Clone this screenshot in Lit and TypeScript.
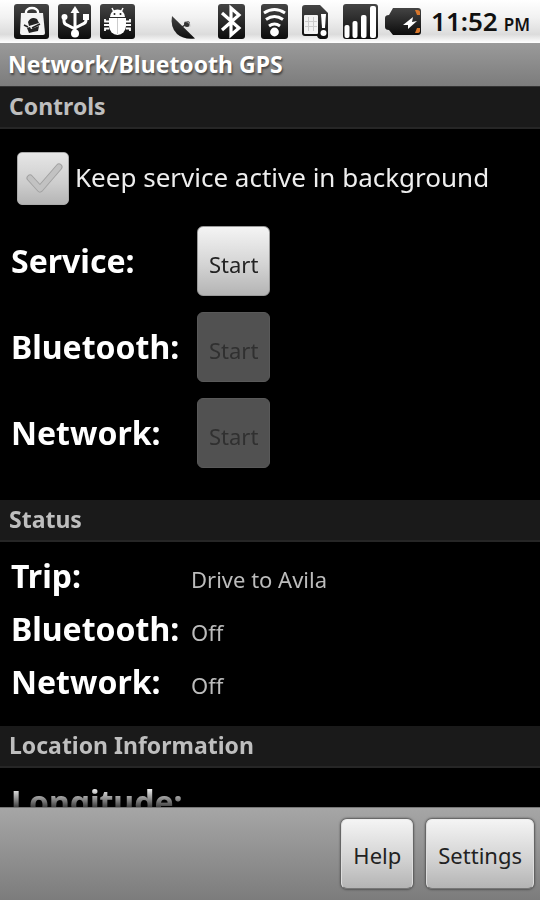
import { LitElement, html, css, svg, nothing } from "lit";
import { customElement, property } from "lit/decorators.js";

const glyphs = {
  bag: svg`
    <rect x="4" y="4" width="35" height="35" rx="3" fill="url(#tile)"/>
    <path d="M16 14v-2a6 4 0 0 1 12 0v2" fill="none" stroke="#fff" stroke-width="2.4"/>
    <path d="M11 13h22l2 20q0 2-2 2H12q-2 0-2-2z" fill="#f4f4f4"/>
    <path d="M18 22q3-6 9-3l2 4-10 3zM17 28l3-1 1 2 8-3-1 5-5 1-4 1z" fill="#222"/>
    <path d="M14 25l4 2M22 28l8-4" stroke="#222" stroke-width="1.600"/>`,
  usb: svg`
    <rect x="5" y="4" width="33" height="35" rx="3" fill="url(#tile)"/>
    <path d="M22 34V11M22 29l-8-4q-3-1-3-4v-4M22 28l8-4q3-1 3-4v-3" fill="none" stroke="#fff" stroke-width="3"/>
    <path d="M22 6l4.500 7h-9z" fill="#fff"/>
    <circle cx="22" cy="33.500" r="4" fill="#fff"/>
    <circle cx="11.500" cy="17" r="3" fill="#fff"/>
    <rect x="30" y="14" width="6" height="6" fill="#fff"/>`,
  bug: svg`
    <rect x="4" y="4" width="35" height="35" rx="3" fill="url(#tile)"/>
    <path d="M14 17a7.500 7.500 0 0 1 15 0z" fill="#fff"/>
    <path d="M16 8l2 4M27 8l-2 4" stroke="#fff" stroke-width="1.500"/>
    <circle cx="18.500" cy="14" r="1" fill="#222"/><circle cx="24.500" cy="14" r="1" fill="#222"/>
    <path d="M13 18h17v8a8.500 9 0 0 1-17 0z" fill="#fff"/>
    <path d="M21.500 18v16" stroke="#ccc" stroke-width="1"/>
    <path d="M13 21.500H9V19M13 25H8M13 28.500H9V31M30 21.500h4V19M30 25h5M30 28.500h4V31" fill="none" stroke="#fff" stroke-width="1.800"/>`,
  dish: svg`
    <path d="M5 16Q3 27 10 34Q17 40 28 38.500Z" fill="url(#tile)"/>
    <path d="M15 27l6-4" stroke="#333" stroke-width="1.500"/>
    <circle cx="20" cy="24" r="3" fill="#333"/>
    <path d="M18 21.500q5 0 5 5" stroke="#bbb" fill="none"/>`,
  bluetooth: svg`
    <rect x="8" y="4" width="27" height="35" rx="3" fill="url(#tile)"/>
    <path d="M12 13l17 15-8 7V8l8 7-17 15" fill="none" stroke="#fff" stroke-width="3.200"/>`,
  wifi: svg`
    <rect x="8" y="4" width="27" height="35" rx="3" fill="url(#tile)"/>
    <path d="M11 13q10.500-7 21 0M13 19.500q8.500-6 17 0M16 26q5.500-4 11 0" fill="none" stroke="#fff" stroke-width="3"/>
    <circle cx="21.500" cy="32" r="4.400" fill="#fff"/>`,
  sim: svg`
    <path d="M9 5h15l8 8v23q0 3-3 3h-5q-2 0-3-3H9q-3 0-3-3V8q0-3 3-3z" fill="url(#tile)"/>
    <rect x="8" y="15" width="14" height="19" rx="1" fill="#f2f2f2"/>
    <path d="M12.500 17v14M17.500 17v14M9 21.500h12M9 26.500h12" stroke="#ccc"/>
    <path d="M25 14h5l-1 14h-3z" fill="#fff"/><circle cx="27.500" cy="33" r="3" fill="#fff"/>`,
  signal: svg`
    <rect x="4" y="4" width="35" height="35" rx="3" fill="url(#tile)"/>
    <rect x="5.500" y="25" width="5" height="13" rx="2" fill="#fff"/>
    <rect x="13.500" y="21" width="5" height="17" rx="2" fill="#fff"/>
    <rect x="22" y="15" width="5.500" height="23" rx="2" fill="#fff"/>
    <rect x="31" y="6" width="6" height="32" rx="2" fill="#fff"/>`,
  battery: svg`
    <path d="M11 8h25q3 0 3 3v21q0 3-3 3H11l-4-5q-4 0-4-3v-9q0-3 4-3z" fill="url(#tile)"/>
    <path d="M33 10h2q3 0 3 2v3h-3zM33 33h2q3 0 3-2v-3h-3z" fill="#d9772b"/>
    <path d="M21 25l10-8-1 5 5-1-9 8 0-4z" fill="#fff"/>`,
};

type GlyphName = keyof typeof glyphs;

@customElement("status-icon")
class StatusIcon extends LitElement {
  @property() name: GlyphName = "bag";

  static styles = css`
    :host { display: block; flex: none; width: 43px; height: 43px; }
    .glyph { display: block; width: 100%; height: 100%; }
  `;

  render() {
    return html`<svg class="glyph" viewBox="0 0 43 43" aria-hidden="true">
      <defs>
        <linearGradient id="tile" x1="0" y1="0" x2="0" y2="1">
          <stop offset="0" stop-color="#444"/><stop offset="1" stop-color="#0c0c0c"/>
        </linearGradient>
      </defs>
      ${glyphs[this.name]}
    </svg>`;
  }
}

@customElement("app-root")
class AppRoot extends LitElement {
  static styles = css`
    :host {
      display: flex;
      flex-direction: column;
      height: 100vh;
      background: #000;
      color: #fff;
      font-family: "Noto Sans", "Open Sans", sans-serif;
      font-size: 22px;
      line-height: 32px;
    }
    * { box-sizing: border-box; }
    .statusbar {
      flex: none;
      display: flex;
      align-items: center;
      justify-content: space-between;
      height: 43px;
      padding: 0 10px;
      background: linear-gradient(#fff, #f2f2f2 40%, #dcdcdc 80%, #fff);
      color: #111;
    }
    .group { display: flex; align-items: center; }
    .clock {
      display: flex;
      align-items: baseline;
      gap: 6px;
      padding-left: 6px;
      padding-top: 2px;
      font-size: 26px;
      font-weight: 600;
    }
    .meridiem { font-size: 17px; }
    .titlebar {
      flex: none;
      height: 44px;
      padding: 5px 8px;
      border-bottom: 1px solid #333;
      background: linear-gradient(#9a9a9a, #7c7c7c);
      font-size: 23px;
      font-weight: 700;
      text-shadow: 1px 2px 2px #444;
    }
    .title { margin: 0; font: inherit; }
    .content {
      flex: 1;
      min-height: 0;
      overflow-y: auto;
      scrollbar-width: none;
      mask-image: linear-gradient(#000 calc(100% - 20px), rgb(0 0 0 / 25%));
    }
    .heading {
      height: 42px;
      margin: 0;
      padding: 3px 9px;
      background: #1a1a1a;
      border-bottom: 2px solid #262626;
      color: #bebebe;
      font-size: 23px;
      font-weight: 700;
    }
    .keep {
      display: flex;
      align-items: center;
      gap: 6px;
      padding: 23px 17px 21px;
      font-size: 26px;
      color: #eee;
    }
    .caption { padding-bottom: 3px; }
    .tick { display: grid; flex: none; width: 52px; height: 53px; }
    .box, .mark { grid-area: 1 / 1; width: 100%; height: 100%; }
    .box {
      appearance: none;
      margin: 0;
      border: 1px solid #aaa;
      border-radius: 5px;
      background: linear-gradient(#e6e6e6, #cdcdcd 60%, #b5b5b5);
    }
    .mark { pointer-events: none; fill: none; stroke-linejoin: round; stroke-linecap: round; }
    .edge { stroke: #a2a2a2; stroke-width: 7; }
    .fill { stroke: #c2c2c2; stroke-width: 5; }
    .box:checked + .mark .fill { stroke: #6fc02c; }
    .rows { display: grid; grid-template-columns: 180px 1fr; margin: 0; padding: 0 11px; }
    .controls { grid-auto-rows: 86px; padding-bottom: 16px; }
    .status { grid-auto-rows: 53px; padding-top: 8px; padding-bottom: 17px; }
    .row { display: contents; }
    .name { margin: 0; font-size: 32px; line-height: 52px; font-weight: 700; white-space: nowrap; }
    .controls .name { line-height: 70px; }
    .value { margin: 0; line-height: 58px; color: #bcbcbc; }
    .controls .cell { padding-left: 6px; }
    .btn {
      height: 70px;
      padding: 6px 11px 0;
      border: 1px solid #999;
      border-radius: 6px;
      background: linear-gradient(#f4f4f4, #d4d4d4 55%, #b4b4b4);
      color: #222;
      font-family: inherit;
      font-size: 22px;
      line-height: 32px;
    }
    .btn:disabled { background: #515151; border-color: #595959; color: #303030; }
    .footer {
      flex: none;
      display: flex;
      justify-content: flex-end;
      gap: 13px;
      padding: 11px 6px;
      border-top: 1px solid #777;
      background: linear-gradient(#a6a6a6, #7c7c7c);
    }
    .footer .btn { padding-top: 2px; border-color: #eee #ddd #777; box-shadow: 0 0 2px 1px #555; }
  `;

  private control(name: string, disabled: boolean) {
    return html`<div class="row">
      <p class="name">${name}:</p>
      <div class="cell">
        <button class="btn" ?disabled=${disabled} aria-label="Start ${name}">Start</button>
      </div>
    </div>`;
  }

  private reading(name: string, value?: string) {
    return html`<div class="row">
      <dt class="name">${name}:</dt>
      <dd class="value">${value ?? nothing}</dd>
    </div>`;
  }

  private icons(names: GlyphName[]) {
    return names.map((n) => html`<status-icon name=${n}></status-icon>`);
  }

  render() {
    return html`
      <div class="statusbar">
        <div class="group">${this.icons(["bag", "usb", "bug"])}</div>
        <div class="group">
          ${this.icons(["dish", "bluetooth", "wifi", "sim", "signal", "battery"])}
          <span class="clock">11:52 <span class="meridiem">PM</span></span>
        </div>
      </div>
      <header class="titlebar"><h1 class="title">Network/Bluetooth GPS</h1></header>
      <main class="content">
        <h2 class="heading">Controls</h2>
        <label class="keep">
          <span class="tick">
            <input class="box" type="checkbox">
            <svg class="mark" viewBox="0 0 52 53" aria-hidden="true">
              <path class="edge" d="M13 26l10 11 19-22"/>
              <path class="fill" d="M13 26l10 11 19-22"/>
            </svg>
          </span>
          <span class="caption">Keep service active in background</span>
        </label>
        <div class="rows controls">
          ${this.control("Service", false)}
          ${this.control("Bluetooth", true)}
          ${this.control("Network", true)}
        </div>
        <h2 class="heading">Status</h2>
        <dl class="rows status">
          ${this.reading("Trip", "Drive to Avila")}
          ${this.reading("Bluetooth", "Off")}
          ${this.reading("Network", "Off")}
        </dl>
        <h2 class="heading">Location Information</h2>
        <dl class="rows status">${this.reading("Longitude")}</dl>
      </main>
      <footer class="footer">
        <button class="btn">Help</button>
        <button class="btn">Settings</button>
      </footer>
    `;
  }
}
